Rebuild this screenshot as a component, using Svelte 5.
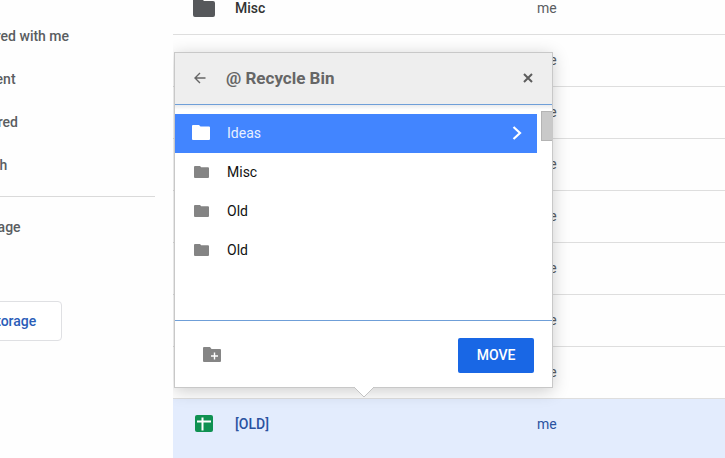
<script>
    const navItems = ['Shared with me', 'Recent', 'Starred', 'Trash'];

    const files = [
        { name: 'Misc', type: 'folder', owner: 'me' },
        { name: '', owner: 'me' },
        { name: '', owner: 'me' },
        { name: '', owner: 'me' },
        { name: '', owner: 'me' },
        { name: '', owner: 'me' },
        { name: '', owner: 'me' },
        { name: '', owner: 'me' },
        { name: '[OLD]', type: 'sheet', owner: 'me', selected: true }
    ];

    const folders = ['Ideas', 'Misc', 'Old', 'Old'];

    let open = true;
    let active = 0;

    function close() {
        open = false;
    }
</script>

<div class="app">
    <aside>
        <nav>
            {#each navItems as item}
                <a href="#{item}">{item}</a>
            {/each}
        </nav>
        <hr />
        <div class="storage">
            <a href="#storage">Storage</a>
            <button>Buy storage</button>
        </div>
    </aside>

    <main>
        <table>
            <tbody>
                {#each files as file}
                    <tr class:selected={file.selected}>
                        <td class="icon">
                            {#if file.type === 'folder'}
                                <svg width="24" height="24" viewBox="0 0 24 24" fill="#56585b">
                                    <path d="M3 2h6l3 3h9q2 0 2 2v12q0 2-2 2H3q-2 0-2-2V4q0-2 2-2z" />
                                </svg>
                            {:else if file.type === 'sheet'}
                                <svg width="24" height="24" viewBox="0 0 24 24">
                                    <rect x="3" y="3" width="18" height="17" rx="2" fill="#0f9151" />
                                    <path d="M10.5 5.500v13M5 9.500h14" stroke="#fff" stroke-width="2" />
                                </svg>
                            {/if}
                        </td>
                        <td class="name">{file.name}</td>
                        <td class="owner">{file.owner}</td>
                    </tr>
                {/each}
            </tbody>
        </table>

        {#if open}
            <div class="popup" role="dialog" aria-labelledby="popup-title">
                <header>
                    <button class="plain back" aria-label="Back">
                        <svg width="12" height="12" viewBox="0 0 12 12" fill="none" stroke="#666" stroke-width="1.4">
                            <path d="M11.5 6H1.2M6 1L1 6l5 5" />
                        </svg>
                    </button>
                    <h2 id="popup-title">@ Recycle Bin</h2>
                    <button class="plain" aria-label="Close" on:click={close}>
                        <svg width="10" height="10" viewBox="0 0 10 10" stroke="#5c5c5c" stroke-width="2">
                            <path d="M1 1l8 8M9 1L1 9" />
                        </svg>
                    </button>
                </header>

                <div class="list">
                    <div class="rows">
                        {#each folders as folder, i}
                            <button class="row" class:active={i === active} on:click={() => (active = i)}>
                                <span class="row-icon">
                                    {#if i === active}
                                        <svg width="18" height="15" viewBox="0 0 18 15" fill="#fff">
                                            <path d="M1 0h6l1.500 1.500H17q1 0 1 1V14q0 1-1 1H1q-1 0-1-1V1q0-1 1-1z" />
                                        </svg>
                                    {:else}
                                        <svg width="15" height="12" viewBox="0 0 15 12" fill="#848484">
                                            <path d="M1 0h5l1.200 1.200H14q1 0 1 1V11q0 1-1 1H1q-1 0-1-1V1q0-1 1-1z" />
                                        </svg>
                                    {/if}
                                </span>
                                <span class="label">{folder}</span>
                                {#if i === active}
                                    <svg width="10" height="14" viewBox="0 0 10 14" fill="none" stroke="#fff" stroke-width="2.2">
                                        <path d="M1.500 1L8 7l-6.500 6" />
                                    </svg>
                                {/if}
                            </button>
                        {/each}
                    </div>
                    <div class="thumb"></div>
                </div>

                <footer>
                    <button class="plain" aria-label="New folder">
                        <svg width="18" height="16" viewBox="0 0 18 16">
                            <path d="M1 0h6l1.500 2H17q1 0 1 1v11q0 1-1 1H1q-1 0-1-1V1q0-1 1-1z" fill="#858585" />
                            <path d="M11.500 5.500v7M8 9h7" stroke="#fff" stroke-width="1.400" />
                        </svg>
                    </button>
                    <button class="move">MOVE</button>
                </footer>

                <svg class="caret" width="20" height="11" viewBox="0 0 20 11">
                    <path d="M0 0L10 10L20 0" fill="#fff" stroke="#c4c4c4" />
                    <path d="M1 0h18" stroke="#fff" />
                </svg>
            </div>
        {/if}
    </main>
</div>

<style>
    .app {
        display: flex;
        height: 100vh;
        overflow: hidden;
        background: #fefefe;
        font-family: Roboto, Arial, sans-serif;
        font-size: 14px;
        color: #5a5d61;
    }

    button {
        font: inherit;
        cursor: pointer;
    }

    svg {
        display: block;
    }

    aside {
        flex: 0 0 173px;
        box-sizing: border-box;
        padding-top: 15px;
        overflow: hidden;
        font-weight: 500;
    }

    /* the menu is scrolled partly out of the window */
    nav,
    .storage {
        display: flex;
        flex-direction: column;
        align-items: flex-start;
        margin-left: -28px;
    }

    aside a {
        line-height: 43px;
        color: inherit;
        text-decoration: none;
        white-space: nowrap;
    }

    hr {
        margin: 9px 18px 9px 0;
        border: 0;
        border-top: 1px solid #dadada;
    }

    .storage button {
        height: 40px;
        margin-top: 52px;
        margin-left: -36px;
        padding: 0 25px;
        border: 1px solid #dfe0e3;
        border-radius: 4px;
        background: #fff;
        color: #2a5db8;
        font-weight: 500;
        white-space: nowrap;
    }

    main {
        position: relative;
        flex: 1;
        overflow: hidden;
    }

    table {
        width: 100%;
        margin-top: -17px;
        border-spacing: 0;
        table-layout: fixed;
    }

    td {
        height: 24px;
        padding: 13px 0 14px;
        border-bottom: 1px solid #dedede;
        line-height: 24px;
        vertical-align: top;
    }

    .icon {
        width: 43px;
        padding-left: 19px;
    }

    .name {
        width: 302px;
        color: #333;
        font-weight: 500;
    }

    .selected td {
        height: 64px;
        background: #e3ecfd;
        color: #2a52a0;
    }

    .popup {
        position: absolute;
        top: 52px;
        left: 1px;
        width: 377px;
        border: 1px solid #c8c8c8;
        background: #fff;
        box-shadow: 0 3px 16px rgba(0, 0, 0, 0.2);
    }

    header {
        display: flex;
        align-items: center;
        height: 49px;
        padding: 0 19px 2px;
        border-bottom: 1px solid #6f9fd8;
        background: #eee;
    }

    h2 {
        flex: 1;
        margin: 0;
        color: #666;
        font-size: 17px;
        font-weight: 700;
    }

    .plain {
        padding: 0;
        border: 0;
        background: none;
    }

    .back {
        width: 32px;
    }

    .list {
        display: flex;
        justify-content: space-between;
        height: 215px;
        border-bottom: 1px solid #6f9fd8;
        background: linear-gradient(#eaebed, #fff 5px);
    }

    .rows {
        flex: 1;
        margin: 9px 4px 0 0;
    }

    .row {
        display: flex;
        align-items: center;
        width: 100%;
        height: 39px;
        padding: 0 15px 2px 17px;
        border: 0;
        background: none;
        color: #111;
        text-align: left;
    }

    .row.active {
        background: #4285ff;
        color: #e8f0ff;
    }

    .row-icon {
        display: flex;
        justify-content: center;
        width: 18px;
        margin-right: 17px;
    }

    .label {
        flex: 1;
    }

    .thumb {
        width: 10px;
        height: 28px;
        margin-top: 6px;
        border: 1px solid #b4b4b4;
        border-right: 0;
        background: #c9c9c9;
    }

    footer {
        display: flex;
        align-items: center;
        justify-content: space-between;
        height: 66px;
        padding: 2px 18px 0 28px;
        box-sizing: border-box;
    }

    .move {
        width: 76px;
        height: 35px;
        border: 0;
        border-radius: 2px;
        background: #1967e5;
        color: #fff;
        font-weight: 500;
    }

    .caret {
        position: absolute;
        top: 100%;
        left: 179px;
    }
</style>
